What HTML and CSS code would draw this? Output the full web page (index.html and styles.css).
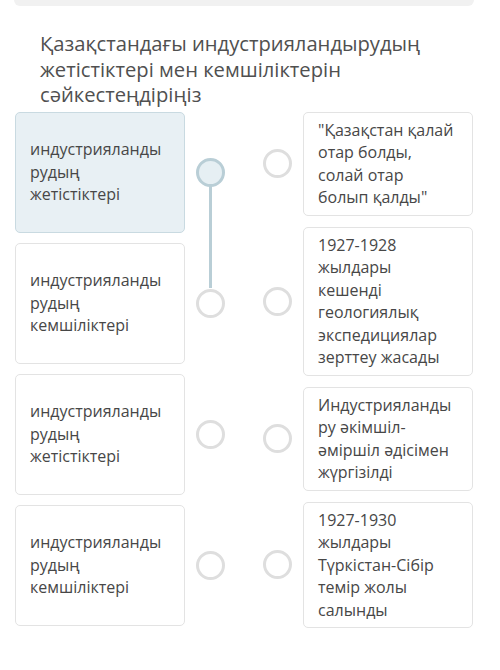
FILE: index.html
```html
<!DOCTYPE html>
<html lang="kk">
<head>
<meta charset="utf-8">
<link rel="stylesheet" href="styles.css">
</head>
<body>
<div class="topbar"></div>
<h1 class="title">Қазақстандағы индустрияландырудың жетістіктері мен кемшіліктерін сәйкестеңдіріңіз</h1>
<div class="board">
  <div class="col col-left">
    <div class="item">
      <div class="card card-left selected">индустрияландырудың жетістіктері</div>
      <span class="dot dot-selected linked"></span>
    </div>
    <div class="item">
      <div class="card card-left">индустрияландырудың кемшіліктері</div>
      <span class="dot"></span>
    </div>
    <div class="item">
      <div class="card card-left">индустрияландырудың жетістіктері</div>
      <span class="dot"></span>
    </div>
    <div class="item">
      <div class="card card-left">индустрияландырудың кемшіліктері</div>
      <span class="dot"></span>
    </div>
  </div>
  <div class="col col-right">
    <div class="item">
      <span class="dot"></span>
      <div class="card card-right">"Қазақстан қалай отар болды, солай отар болып қалды"</div>
    </div>
    <div class="item">
      <span class="dot"></span>
      <div class="card card-right">1927-1928 жылдары кешенді геологиялық экспедициялар зерттеу жасады</div>
    </div>
    <div class="item">
      <span class="dot"></span>
      <div class="card card-right">Индустрияландыру әкімшіл-әміршіл әдісімен жүргізілді</div>
    </div>
    <div class="item">
      <span class="dot"></span>
      <div class="card card-right">1927-1930 жылдары Түркістан-Сібір темір жолы салынды</div>
    </div>
  </div>
</div>
</body>
</html>
```

FILE: styles.css
```css
html, body {
  margin: 0;
  padding: 0;
  background: #ffffff;
}
body {
  width: 500px;
  height: 670px;
  overflow: hidden;
  font-family: "Open Sans", "Noto Sans", sans-serif;
  color: #474747;
}
.topbar {
  height: 6px;
  margin: 0 26px 0 14px;
  background: #f1f1f1;
  border-radius: 0 0 7px 7px;
}
.title {
  margin: 0;
  padding: 25px 38px 0 40px;
  font-size: 20.2px;
  font-weight: 400;
  line-height: 25.5px;
  color: #505050;
}
.board {
  display: flex;
  gap: 38px;
  padding: 4px 0 0 15px;
}
.col {
  display: flex;
  flex-direction: column;
  gap: 10px;
}
.col-right {
  gap: 11px;
}
.item {
  display: flex;
  align-items: center;
  gap: 11px;
}
.card {
  box-sizing: border-box;
  width: 170px;
  border: 1px solid #e3e3e3;
  border-radius: 5px;
  background: #ffffff;
  font-size: 16px;
  line-height: 22.5px;
  overflow-wrap: anywhere;
  word-break: break-word;
}
.card-left {
  height: 121px;
  padding: 0 14px;
  display: flex;
  align-items: center;
}
.card-right {
  padding: 6px 14px 6px 14px;
}
.selected {
  background: #e8f0f4;
  border-color: #c9dae1;
}
.dot {
  position: relative;
  flex: none;
  box-sizing: border-box;
  width: 29px;
  height: 29px;
  border: 3px solid #dedede;
  border-radius: 50%;
  background: #ffffff;
}
.dot-selected {
  border-color: #b9ced6;
  background: #e6eff3;
}
.linked::after {
  content: "";
  position: absolute;
  left: 50%;
  top: 100%;
  width: 3px;
  height: 103px;
  margin-left: -1.5px;
  margin-top: 1px;
  background: #b9ced6;
}
```
